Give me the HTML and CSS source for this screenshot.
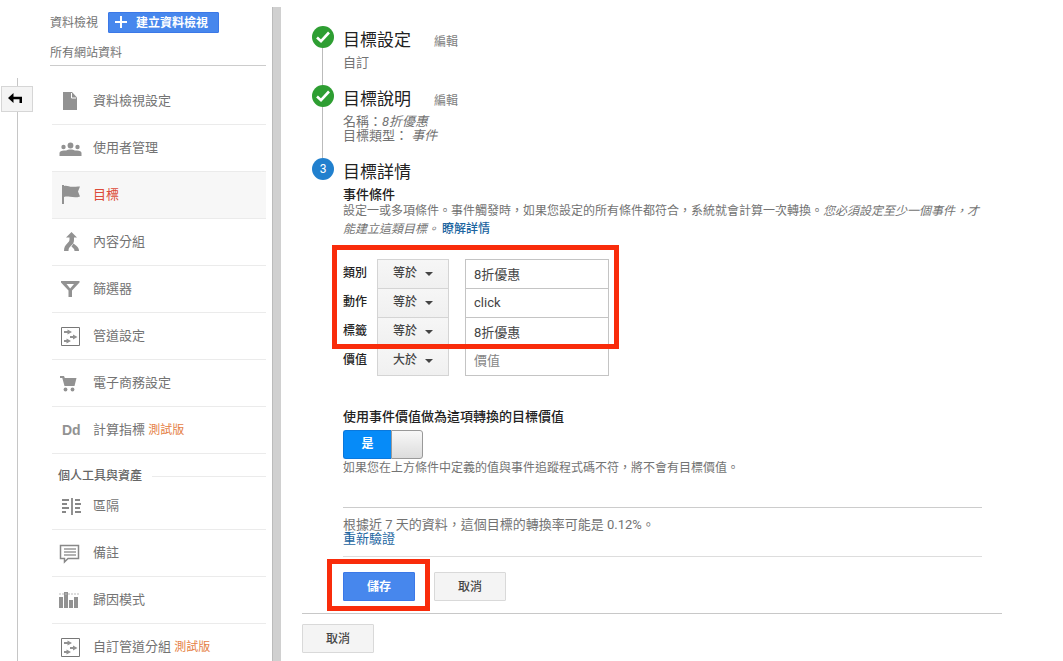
FILE: index.html
```html
<!DOCTYPE html>
<html lang="zh-Hant">
<head>
<meta charset="utf-8">
<meta name="viewport" content="width=device-width, initial-scale=1">
<title>目標設定</title>
<link rel="stylesheet" href="styles.css">
</head>
<body>
<div class="page">
  <div class="rail">
    <button class="back" type="button" aria-label="返回">
      <svg width="16" height="12" viewBox="0 0 16 12"><path d="M0 5 5.500 0v3.700H14V10h-2.500V6.300h-6V10z"/></svg>
    </button>
  </div>

  <aside class="sidebar">
    <div class="view-head">
      <span class="view-label">資料檢視</span>
      <button class="create" type="button">
        <svg width="12" height="12" viewBox="0 0 12 12"><path d="M6 0v12M0 6h12" stroke="#fff" stroke-width="2"/></svg>
        建立資料檢視
      </button>
    </div>
    <div class="view-name">所有網站資料</div>
    <nav>
      <ul class="nav">
        <li><a class="nav-item" href="#"><svg class="icon" viewBox="0 0 24 24"><path d="M5 3h9l5 5.500V21H5z"/><path d="M13.500 4v5H18" fill="none" stroke="#fff"/></svg>資料檢視設定</a></li>
        <li><a class="nav-item" href="#"><svg class="icon" viewBox="0 0 24 24"><circle cx="5.500" cy="11" r="2.200"/><circle cx="12.500" cy="9.500" r="2.900"/><circle cx="19.500" cy="11" r="2.200"/><path d="M1.500 20v-3c0-1.800 2-2.600 4.500-2.600l2 .2c1-.8 2.500-1.200 4.500-1.200s3.500.4 4.500 1.200l2-.2c2.800 0 4.500.8 4.500 2.600v3z"/></svg>使用者管理</a></li>
        <li><a class="nav-item active" href="#"><svg class="icon" viewBox="0 0 24 24"><path d="M4 2h2v1c3-1 5 .8 8 .8 2.500 0 5-.3 8-.3l-2 5 2 5c-4 1.500-7 .7-10 .3-2-.3-4-.4-6 .2v7H4z"/></svg>目標</a></li>
        <li><a class="nav-item" href="#"><svg class="icon" viewBox="0 0 24 24"><path d="m13.500 2 5.500 5.500h-3V10c0 2.500-1 4-3 5.800-1.800 1.700-2.500 2.800-2.500 5.200H6c0-4 1.200-5.500 3.200-7.500 1.700-1.700 2.300-2.500 2.300-4V7.500H8z"/><path d="m15.500 13.500 2.800 2.200c2 1.500 2.700 3.300 2.700 5.300h-4.500c0-1.700-1-2.800-3-4.500z"/></svg>內容分組</a></li>
        <li><a class="nav-item" href="#"><svg class="icon" viewBox="0 0 24 24"><path fill-rule="evenodd" d="M3 4h18.500v1.500L14 13.500V20h-3.500v-6.500L3 5.500zM8.500 7l3.700 4.500L16 7z"/></svg>篩選器</a></li>
        <li><a class="nav-item" href="#"><svg class="icon" viewBox="0 0 24 24"><path d="M3.500 3.500h18v18h-18z" fill="none" stroke="#777"/><path d="M6 7h3.500V5.500L14 8l-4.500 2.500V9H6zM12 12h3V10.500l4.500 2.500-4.500 2.500V14h-3zM6 16h2.500v-1.500L13 17l-4.500 2.500V18H6z"/></svg>管道設定</a></li>
        <li><a class="nav-item" href="#"><svg class="icon" viewBox="0 0 24 24"><path d="M2 5h4l.8 2H18.500l-2 8H6.500L4.300 7H2z"/><circle cx="7.500" cy="18.500" r="1.900"/><circle cx="14.500" cy="18.500" r="1.900"/></svg>電子商務設定</a></li>
        <li><a class="nav-item" href="#"><span class="icon dd">Dd</span><span>計算指標 <span class="beta">測試版</span></span></a></li>
      </ul>
      <h2 class="nav-title">個人工具與資產</h2>
      <ul class="nav">
        <li><a class="nav-item" href="#"><svg class="icon" viewBox="0 0 24 24"><path d="M4 6h7M4 10h5M4 14h7M4 18h4M17 6h5M17 10h6M17 14h5M17 18h6" fill="none" stroke="#888" stroke-width="1.800"/><path d="M13 4h2v17h-2z"/></svg>區隔</a></li>
        <li><a class="nav-item" href="#"><svg class="icon" viewBox="0 0 24 24"><path d="M2.500 4.500h18v13H10L6.500 21v-3.500h-4z" fill="none" stroke="#888" stroke-width="1.500"/><path d="M6 8h12M6 11h12M6 14h12" fill="none" stroke="#999" stroke-width="1.300"/></svg>備註</a></li>
        <li><a class="nav-item" href="#"><svg class="icon" viewBox="0 0 24 24"><path d="M1 9h4v11H1zM6 4h4v16H6zM11 12h4v8h-4zM16 9h4v11h-4z"/><path d="M1 6h20" fill="none" stroke="#bbb" stroke-dasharray="2 1"/></svg>歸因模式</a></li>
        <li><a class="nav-item" href="#"><svg class="icon" viewBox="0 0 24 24"><path d="M3.500 3.500h18v18h-18z" fill="none" stroke="#777"/><path d="M6 7h3.500V5.500L14 8l-4.500 2.500V9H6zM12 12h3V10.500l4.500 2.500-4.500 2.500V14h-3zM6 16h2.500v-1.500L13 17l-4.500 2.500V18H6z"/></svg><span>自訂管道分組 <span class="beta">測試版</span></span></a></li>
      </ul>
    </nav>
  </aside>

  <div class="divider"></div>

  <main class="main">
    <section class="step">
      <div class="marker"><span class="dot done"><svg width="22" height="22" viewBox="0 0 22 22"><path d="m5 11.500 4 3.700L17 6.500" fill="none" stroke="#fff" stroke-width="2.600"/></svg></span></div>
      <div class="step-body">
        <div class="step-head"><h1>目標設定</h1><a class="edit" href="#">編輯</a></div>
        <p class="summary">自訂</p>
      </div>
    </section>
    <section class="step">
      <div class="marker"><span class="dot done"><svg width="22" height="22" viewBox="0 0 22 22"><path d="m5 11.500 4 3.700L17 6.500" fill="none" stroke="#fff" stroke-width="2.600"/></svg></span></div>
      <div class="step-body">
        <div class="step-head"><h1>目標說明</h1><a class="edit" href="#">編輯</a></div>
        <p class="summary">名稱：<em>8折優惠</em></p>
        <p class="summary">目標類型： <em>事件</em></p>
      </div>
    </section>
    <section class="step current">
      <div class="marker"><span class="dot">3</span></div>
      <div class="step-body">
        <div class="step-head"><h1>目標詳情</h1></div>
        <h2 class="subhead">事件條件</h2>
        <p class="hint">設定一或多項條件。事件觸發時，如果您設定的所有條件都符合，系統就會計算一次轉換。<em>您必須設定至少一個事件，才能建立這類目標。</em> <a class="link medium" href="#">瞭解詳情</a></p>

        <div class="conditions">
          <div class="row">
            <label for="category">類別</label>
            <span class="picker"><select aria-label="類別條件"><option>等於</option></select><i class="caret"></i></span>
            <input id="category" class="field" type="text" value="8折優惠">
          </div>
          <div class="row">
            <label for="action">動作</label>
            <span class="picker"><select aria-label="動作條件"><option>等於</option></select><i class="caret"></i></span>
            <input id="action" class="field" type="text" value="click">
          </div>
          <div class="row">
            <label for="tag">標籤</label>
            <span class="picker"><select aria-label="標籤條件"><option>等於</option></select><i class="caret"></i></span>
            <input id="tag" class="field" type="text" value="8折優惠">
          </div>
          <div class="row">
            <label for="value">價值</label>
            <span class="picker"><select aria-label="價值條件"><option>大於</option></select><i class="caret"></i></span>
            <input id="value" class="field" type="text" placeholder="價值">
          </div>
          <div class="callout callout-rows"></div>
        </div>

        <h2 class="subhead" id="use-value">使用事件價值做為這項轉換的目標價值</h2>
        <label class="toggle"><input type="checkbox" role="switch" aria-labelledby="use-value" checked><span class="toggle-on">是</span><span class="toggle-knob"></span></label>
        <p class="hint">如果您在上方條件中定義的值與事件追蹤程式碼不符，將不會有目標價值。</p>

        <div class="verify">
          <p class="summary">根據近 7 天的資料，這個目標的轉換率可能是 0.12%。</p>
          <p class="summary"><a class="link" href="#">重新驗證</a></p>
        </div>

        <div class="actions">
          <div class="save-wrap">
            <button class="button primary" type="submit">儲存</button>
            <div class="callout callout-save"></div>
          </div>
          <button class="button" type="button">取消</button>
        </div>
      </div>
    </section>
    <footer class="footer"><button class="button" type="button">取消</button></footer>
  </main>
</div>
</body>
</html>
```
FILE: styles.css
```css
* { box-sizing: border-box; }

body {
  margin: 0;
  background: #fff;
  color: #222;
  font: 13px/14px Roboto, "Noto Sans CJK TC", sans-serif;
}

h1, h2, p, ul { margin: 0; padding: 0; font-weight: 400; }
ul { list-style: none; }
a { color: inherit; text-decoration: none; }
button, input, select { font-family: inherit; margin: 0; }

.page {
  display: flex;
  height: 100vh;
  overflow: hidden;
}

/* Left rail */
.rail {
  flex: none;
  width: 50px;
  padding: 78px 0 0 1px;
  background: linear-gradient(#c6c6c6, #c6c6c6) 17px 78px / 1px 100% no-repeat;
}
.back {
  display: flex;
  align-items: center;
  width: 32px;
  height: 26px;
  margin-top: 8px;
  padding: 0 0 0 6px;
  border: 1px solid #d6d6d6;
  background: #f4f4f4;
}

/* Sidebar */
.sidebar { flex: none; width: 216px; padding-top: 12px; color: #737373; }
.view-head { display: flex; align-items: center; gap: 10px; font-size: 12px; }
.create {
  display: flex;
  align-items: center;
  gap: 9px;
  height: 21px;
  padding: 0 10px 2px 6px;
  border: 1px solid #3b78e7;
  border-radius: 1px;
  background: #4787ed;
  color: #fff;
  font-size: 12px;
  font-weight: 700;
  white-space: nowrap;
}
.view-name {
  height: 33px;
  padding-top: 13px;
  border-bottom: 1px solid #ccc;
  font-size: 12px;
}
nav { padding-top: 12px; }
.nav-item {
  display: flex;
  align-items: center;
  gap: 11px;
  height: 47px;
  margin-left: 2px;
  padding-left: 6px;
  border-bottom: 1px solid #ebebeb;
}
.nav-item.active { background: #f7f7f7; color: #dd4b39; }
.icon { flex: none; width: 24px; height: 24px; fill: #929292; }
.dd { color: #929292; font: 700 14px/24px "Liberation Sans", sans-serif; padding-left: 4px; }
.beta { color: #e58145; font-size: 12px; }
.nav-title {
  display: flex;
  align-items: center;
  gap: 10px;
  height: 29px;
  padding: 15px 0 0 8px;
  font-size: 12px;
  font-weight: 500;
  color: #666;
}
.nav-title::after { content: ""; flex: 1; border-top: 1px solid #ebebeb; }

.divider { flex: none; width: 9px; margin: 7px 0 0 6px; background: #d0d0d0; border-left: 1px solid #bbb; }

/* Main column */
.main { flex: 1; min-width: 0; padding: 26px 61px 0 21px; }
.step { display: flex; gap: 9px; padding: 0 20px 0 10px; }
.marker {
  flex: none;
  width: 22px;
  background: linear-gradient(#bbb, #bbb) 10px 0 / 1px 100% no-repeat;
}
.current .marker { background: none; }
.dot {
  display: flex;
  align-items: center;
  justify-content: center;
  width: 22px;
  height: 22px;
  border-radius: 50%;
  background: #2180ce;
  color: #fff;
  font-size: 12px;
}
.done { background: #2e9e32; }
.step-body { flex: 1; min-width: 0; padding: 1px 0 15px; }
.current .step-body { padding-bottom: 12px; }
.step-head { display: flex; align-items: center; gap: 23px; height: 26px; margin-bottom: 3px; }
.step-head h1 { font-size: 17px; line-height: 26px; color: #222; }
.edit { color: #808080; font-size: 12px; line-height: 14px; padding-top: 3px; }
.summary { color: #737373; }
.subhead { font-size: 13px; font-weight: 500; color: #222; }
.hint { color: #737373; font-size: 12px; line-height: 18px; }
.link { color: #1c659f; }
.medium { font-weight: 500; }

/* Condition rows */
.conditions { position: relative; padding: 21px 0 35px; }
.row { display: flex; align-items: center; height: 29px; }
.row label { width: 34px; padding-bottom: 1px; font-size: 12px; font-weight: 500; }
.picker { position: relative; width: 72px; height: 30px; margin-right: 16px; }
.picker select {
  appearance: none;
  width: 100%;
  height: 30px;
  padding: 0 15px 1px;
  border: 1px solid #d4d4d4;
  border-radius: 0;
  background: linear-gradient(#f6f6f6, #f0f0f0);
  color: #444;
  font-size: 12px;
  font-weight: 500;
}
.caret {
  position: absolute;
  right: 16px;
  top: 13px;
  border: 4px solid transparent;
  border-top-color: #444;
  border-bottom: 0;
  pointer-events: none;
}
.field {
  width: 144px;
  height: 30px;
  padding: 0 8px;
  border: 1px solid #c4c4c4;
  border-radius: 0;
  background: #fff;
  color: #444;
  font-size: 13px;
}
.field::placeholder { color: #858585; }

.callout { position: absolute; border: 5px solid #f92c0b; pointer-events: none; }
.callout-rows { top: 7px; left: -11px; width: 287px; height: 104px; }
.callout-save { inset: -13px -15px -10px -16px; }

/* Switch */
.toggle { position: relative; display: flex; width: 80px; height: 29px; margin-top: 6px; }
.toggle input { position: absolute; inset: 0; width: 100%; height: 100%; opacity: 0; }
.toggle-on {
  flex: 1;
  border: 1px solid #0a78dc;
  border-right: 0;
  border-radius: 3px 0 0 3px;
  background: #068bf8;
  color: #fff;
  font-size: 12px;
  font-weight: 700;
  line-height: 27px;
  text-align: center;
}
.toggle-knob {
  width: 32px;
  border: 1px solid #999;
  border-radius: 0 3px 3px 0;
  background: linear-gradient(#f8f8f8, #dcdcdc);
}

.verify {
  margin-top: 30px;
  padding: 10px 0;
  border-top: 1px solid #ccc;
  border-bottom: 1px solid #ddd;
}
.actions { display: flex; gap: 19px; padding-top: 15px; }
.save-wrap { position: relative; }
.button {
  display: block;
  width: 72px;
  height: 29px;
  padding: 0 0 2px;
  border: 1px solid #d9d9d9;
  border-radius: 1px;
  background: #f4f4f4;
  color: #444;
  font-size: 12px;
  font-weight: 500;
}
.primary { border-color: #3b78e7; background: #4787ed; color: #fff; font-weight: 700; }
.footer { padding-top: 10px; border-top: 1px solid #c8c8c8; }
```
